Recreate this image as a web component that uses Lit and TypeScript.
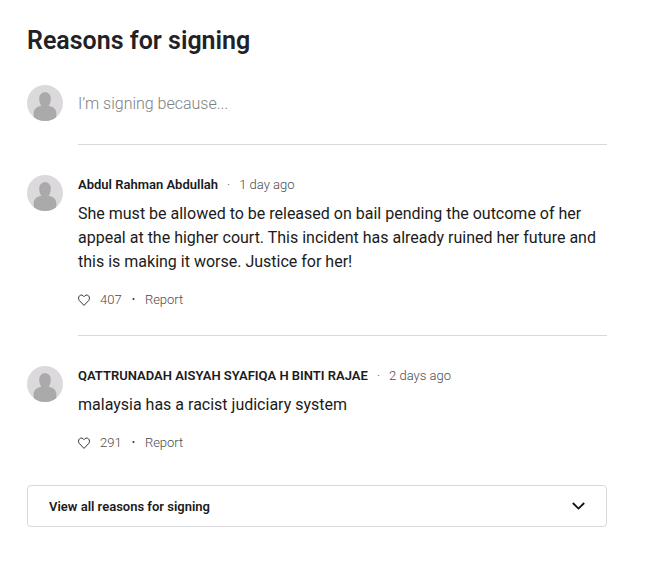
import { LitElement, html, css } from "lit";
import { customElement, property, state } from "lit/decorators.js";

interface Reason {
  name: string;
  when: string;
  text: string;
  likes: number;
}

@customElement("user-avatar")
class UserAvatar extends LitElement {
  static styles = css`
    :host { display: block; flex: none; width: 36px; height: 36px; }
    svg { display: block; }
  `;

  render() {
    return html`<svg width="36" height="36" viewBox="0 0 36 36" aria-hidden="true">
      <circle cx="18" cy="18" r="18" fill="#dbd9db" />
      <path
        fill="#aaa"
        stroke="#9d9d9d"
        stroke-width=".5"
        d="M18 7.6c-3.4 0-5.4 2.4-5.4 5.8 0 2.6.5 5.2 1.9 6.9v1c-4.400.3-7.500 2.900-7.500 6.800v3.800C10 34.400 14 35.700 18 35.700s8-1.300 11-3.800v-3.800c0-3.900-3.100-6.500-7.500-6.800v-1c1.400-1.700 1.900-4.300 1.900-6.900 0-3.400-2-5.800-5.400-5.800z"
      />
    </svg>`;
  }
}

@customElement("reason-item")
class ReasonItem extends LitElement {
  @property({ attribute: false }) reason!: Reason;

  static styles = css`
    :host { display: flex; gap: 15px; }
    .body { flex: 1; min-width: 0; padding-bottom: 24px; }
    :host([divided]) .body { border-bottom: 1px solid #d9d9d9; }
    .meta { display: flex; flex-wrap: wrap; gap: 9px; font-size: 13px; line-height: 20px; font-weight: 300; color: #4a4a4a; }
    .name { font-weight: 600; color: #1b1b20; }
    .text { margin: 7px 0 15px; font-size: 16px; line-height: 24px; color: #1b1b20; }
    .actions { display: flex; align-items: center; gap: 10px; font-size: 13px; line-height: 22px; font-weight: 300; color: #4a4a4a; }
    .dot { font-size: 10px; color: #333; }
    button {
      display: flex; align-items: center; gap: 10px; padding: 0; border: 0;
      background: none; font: inherit; color: inherit; cursor: pointer;
    }
  `;

  render() {
    const r = this.reason;
    return html`
      <user-avatar></user-avatar>
      <div class="body">
        <div class="meta">
          <span class="name">${r.name}</span><span>·</span><span>${r.when}</span>
        </div>
        <p class="text">${r.text}</p>
        <div class="actions">
          <button type="button" aria-label="Like, ${r.likes}">
            <svg width="12" height="12" viewBox="0 0 12 12" fill="none" stroke="#333" aria-hidden="true">
              <path d="M6 11.400 1.4 6.600C.2 5.200.3 2.900 1.500 1.800 2.800.6 4.900.8 6 2.700 7.100.8 9.200.6 10.500 1.800c1.200 1.100 1.300 3.400.1 4.800z" />
            </svg>
            <span>${r.likes}</span>
          </button>
          <span class="dot">•</span>
          <button type="button">Report</button>
        </div>
      </div>
    `;
  }
}

@customElement("app-root")
class AppRoot extends LitElement {
  @state() private reasons: Reason[] = [
    {
      name: "Abdul Rahman Abdullah",
      when: "1 day ago",
      text: "She must be allowed to be released on bail pending the outcome of her appeal at the higher court. This incident has already ruined her future and this is making it worse. Justice for her!",
      likes: 407,
    },
    {
      name: "QATTRUNADAH AISYAH SYAFIQA H BINTI RAJAE",
      when: "2 days ago",
      text: "malaysia has a racist judiciary system",
      likes: 291,
    },
  ];

  static styles = css`
    :host {
      display: block; box-sizing: border-box; padding: 25px 53px 40px 27px;
      background: #fff; font-family: Roboto, "Liberation Sans", sans-serif;
    }
    h2 { margin: 0 0 28px; font-size: 25px; line-height: 32px; font-weight: 600; color: #222226; }
    .compose { display: flex; gap: 15px; margin-bottom: 30px; }
    .field { flex: 1; min-width: 0; padding-bottom: 23px; border-bottom: 1px solid #d9d9d9; }
    input {
      display: block; box-sizing: border-box; width: 100%; height: 36px; padding: 0; border: 0;
      outline: 0; background: none; font: inherit; font-size: 16px; color: #1b1b20;
    }
    input::placeholder { font-weight: 300; color: #808080; opacity: 1; }
    .list { display: grid; gap: 30px; }
    .more {
      display: flex; align-items: center; justify-content: space-between; box-sizing: border-box;
      width: 100%; height: 42px; margin-top: 7px; padding: 0 21px; border: 1px solid #d9d9d9;
      border-radius: 4px; background: #fff; font: inherit; font-size: 13px; font-weight: 600;
      color: #1b1b20; cursor: pointer;
    }
  `;

  render() {
    return html`
      <h2>Reasons for signing</h2>
      <div class="compose">
        <user-avatar></user-avatar>
        <div class="field">
          <input type="text" aria-label="Your reason for signing" placeholder="I’m signing because..." />
        </div>
      </div>
      <div class="list">
        ${this.reasons.map(
          (r, i) => html`<reason-item .reason=${r} ?divided=${i < this.reasons.length - 1}></reason-item>`
        )}
      </div>
      <button class="more" type="button">
        <span>View all reasons for signing</span>
        <svg width="13" height="8" viewBox="0 0 13 8" fill="none" stroke="#111" stroke-width="1.8" aria-hidden="true">
          <path d="M.8 1 6.5 6.6 12.2 1" />
        </svg>
      </button>
    `;
  }
}
